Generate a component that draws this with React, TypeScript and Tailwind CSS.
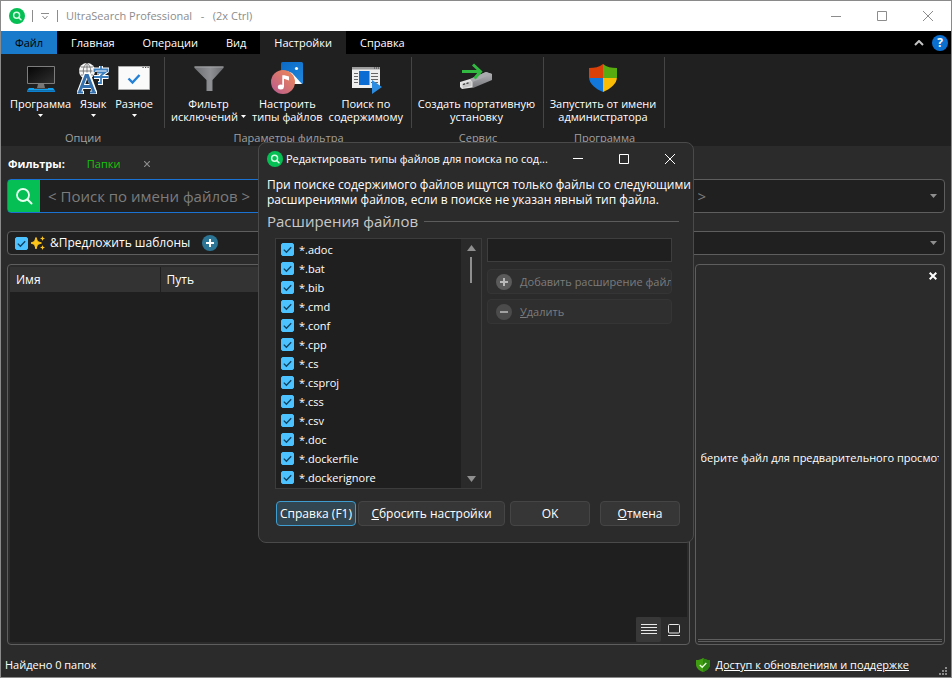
import React, { useState } from "react";

const extensions = [
  "*.adoc",
  "*.bat",
  "*.bib",
  "*.cmd",
  "*.conf",
  "*.cpp",
  "*.cs",
  "*.csproj",
  "*.css",
  "*.csv",
  "*.doc",
  "*.dockerfile",
  "*.dockerignore",
];

const tabs = ["Главная", "Операции", "Вид", "Настройки", "Справка"];

const AppLogo: React.FC = () => (
  <svg className="size-4 shrink-0" viewBox="0 0 16 16" aria-hidden="true">
    <circle cx="8" cy="8" r="8" fill="#06bf54" />
    <circle cx="7.6" cy="7.2" r="3" fill="none" stroke="#d8ffe6" strokeWidth="1.4" />
    <path d="M9.8 9.6l2.2 2.2" stroke="#d8ffe6" strokeWidth="1.5" strokeLinecap="round" />
  </svg>
);

const Caret: React.FC<{ className?: string }> = ({ className }) => (
  <svg className={className} width="5" height="3" viewBox="0 0 5 3" aria-hidden="true">
    <path d="M0 0h5L2.5 3z" fill="currentColor" />
  </svg>
);

interface WindowButtonsProps {
  className: string;
}

const WindowButtons: React.FC<WindowButtonsProps> = ({ className }) => (
  <div className={className}>
    <button type="button" aria-label="Свернуть" className="flex h-full w-[46px] items-center justify-center">
      <svg width="11" height="11" viewBox="0 0 11 11" aria-hidden="true">
        <path d="M0 5.5h10" stroke="currentColor" />
      </svg>
    </button>
    <button type="button" aria-label="Развернуть" className="flex h-full w-[46px] items-center justify-center">
      <svg width="10" height="10" viewBox="0 0 10 10" aria-hidden="true">
        <path d="M.5.5h9v9h-9z" fill="none" stroke="currentColor" />
      </svg>
    </button>
    <button type="button" aria-label="Закрыть" className="flex h-full w-[46px] items-center justify-center">
      <svg width="10" height="10" viewBox="0 0 10 10" aria-hidden="true">
        <path d="M0 0l10 10M10 0L0 10" stroke="currentColor" />
      </svg>
    </button>
  </div>
);

const CheckBox: React.FC<{ id: string }> = ({ id }) => {
  const [checked, setChecked] = useState(true);
  return (
    <span className="grid size-[13px] shrink-0">
      <input
        id={id}
        type="checkbox"
        checked={checked}
        onChange={() => setChecked(!checked)}
        className="col-start-1 row-start-1 size-[13px] appearance-none rounded-xs border border-[#4cc2ff] checked:bg-[#4cc2ff]"
      />
      {checked && (
        <svg className="pointer-events-none col-start-1 row-start-1" width="13" height="13" viewBox="0 0 13 13" aria-hidden="true">
          <path d="M2.8 6.6l2.6 2.6 4.8-5" fill="none" stroke="#12405c" strokeWidth="1.3" />
        </svg>
      )}
    </span>
  );
};

const MonitorIcon: React.FC = () => (
  <svg width="32" height="32" viewBox="0 0 32 32" aria-hidden="true">
    <defs>
      <linearGradient id="screen" x1="0" y1="0" x2="1" y2="1">
        <stop offset="0" stopColor="#050505" />
        <stop offset="1" stopColor="#303030" />
      </linearGradient>
    </defs>
    <path d="M4 26h24l2 2.500H2z" fill="#12a0ee" />
    <path d="M2 28.500h28V30H2z" fill="#0b7fd0" />
    <path d="M13 22h6l1 4h-8z" fill="#777" />
    <path d="M9 26h14v1H9z" fill="#444" />
    <path d="M2.500 4.500h27v17h-27z" fill="url(#screen)" stroke="#7d7d7d" />
  </svg>
);

const LanguageIcon: React.FC = () => (
  <svg width="32" height="32" viewBox="0 0 32 32" aria-hidden="true">
    <circle cx="10" cy="9" r="8" fill="#f4f4f4" />
    <path
      d="M10 1v16M2 9h16M4 5h12M4 13h12M10 1c-5 4-5 12 0 16c5-4 5-12 0-16"
      fill="none"
      stroke="#666"
      strokeWidth=".8"
    />
    <path d="M2.500 30L9 13h2.500l6 17M5.500 24.500h9.500" fill="none" stroke="#fff" strokeWidth="5" />
    <path d="M0 30.500h7M13 30.500h7" stroke="#fff" strokeWidth="3.500" />
    <path d="M2.500 30L9 13.500h1.500L17 30M5.500 24.500h9" fill="none" stroke="#3470ad" strokeWidth="3" />
    <path d="M.5 30.500h5.500M13 30.500h6" stroke="#3470ad" strokeWidth="1.800" />
    <path
      d="M24 4v3M17.500 10V7.500h13V10M20 10.500h8l-4 3v7.500h-3M17 15h14.500"
      fill="none"
      stroke="#fff"
      strokeWidth="4"
    />
    <path
      d="M24 4v3M17.500 10V7.500h13V10M20 10.500h8l-4 3v7.500h-3M17 15h14.500"
      fill="none"
      stroke="#3d7ebd"
      strokeWidth="1.800"
    />
  </svg>
);

const WindowCheckIcon: React.FC = () => (
  <svg width="32" height="32" viewBox="0 0 32 32" aria-hidden="true">
    <path d="M.5 4.500h31v23H.5z" fill="#fafafa" stroke="#aaa" />
    <path d="M24.500 5.500h1.200M27 5.500h1.200M29.500 5.500h1.200" stroke="#444" />
    <path d="M10.500 16.500l4 4 7-7.500" fill="none" stroke="#2380d8" strokeWidth="2.400" />
  </svg>
);

const FunnelIcon: React.FC = () => (
  <svg width="32" height="32" viewBox="0 0 32 32" aria-hidden="true">
    <defs>
      <linearGradient id="funnel" x1="0" y1="0" x2="1" y2="0">
        <stop offset="0" stopColor="#6d6f72" />
        <stop offset=".55" stopColor="#8e9093" />
        <stop offset="1" stopColor="#696b6e" />
      </linearGradient>
    </defs>
    <path d="M1.500 4.500h29v1.500L19.500 18v11h-6V18L1.500 6z" fill="url(#funnel)" />
    <path d="M1.500 4.500h29v1H1.500z" fill="#a4a5a7" />
  </svg>
);

const MediaIcon: React.FC = () => (
  <svg width="32" height="32" viewBox="0 0 32 32" aria-hidden="true">
    <defs>
      <linearGradient id="picture" x1="0" y1="0" x2="1" y2="1">
        <stop offset="0" stopColor="#0a69c4" />
        <stop offset="1" stopColor="#2187dc" />
      </linearGradient>
      <linearGradient id="music" x1="0" y1="1" x2="1" y2="0">
        <stop offset="0" stopColor="#b85a92" />
        <stop offset="1" stopColor="#f08a52" />
      </linearGradient>
    </defs>
    <rect x="10" y="0" width="22" height="22" rx="1.500" fill="url(#picture)" />
    <path d="M16 9l5 2 10 11H20z" fill="#fff" />
    <circle cx="25.500" cy="6.500" r="1.600" fill="#fff" />
    <circle cx="12" cy="20" r="12" fill="url(#music)" />
    <ellipse cx="9.800" cy="25" rx="3" ry="2.500" fill="#fff" />
    <path d="M11.300 13.200h2l4.700 1.300v4l-5-1.800v8.300h-1.700z" fill="#fff" />
  </svg>
);

const ContentSearchIcon: React.FC = () => (
  <svg width="32" height="32" viewBox="0 0 32 32" aria-hidden="true">
    <path d="M2 5h28v21H2z" fill="#eeeeee" />
    <path d="M2 5h28v2.500H2z" fill="#9c9c9c" />
    <path d="M24 6h1M26 6h1M28 6h1" stroke="#333" />
    <path d="M4 11.500h4M4 14.500h4M4 17.500h4M4 20.500h4M21 11.500h7M21 14.500h7M21 17.500h7M21 20.500h7" stroke="#666" />
    <path d="M9 9h10.500v14H9z" fill="#0b6cd4" />
    <path d="M22 18v14l10-7z" fill="#2b8ce0" />
  </svg>
);

const UsbIcon: React.FC = () => (
  <svg width="32" height="32" viewBox="0 0 32 32" aria-hidden="true">
    <defs>
      <linearGradient id="usb" x1="0" y1="0" x2="0" y2="1">
        <stop offset="0" stopColor="#b5b5b8" />
        <stop offset="1" stopColor="#77787c" />
      </linearGradient>
    </defs>
    <path d="M10 17l16-7 6 2v6l-19 8-4-3z" fill="url(#usb)" />
    <path d="M10 17l16-7 6 2-19.500 8z" fill="#a9aaad" />
    <path d="M0 20l10-3 2.500 3v5.500L2 27l-2-2z" fill="#e4e4e4" />
    <path d="M2 22l9.500-3v5L3 26z" fill="#c5c5c5" />
    <path d="M3 22.500l2-.6M6.500 21.500l2-.6" stroke="#333" strokeWidth="1.300" />
    <path d="M2 9.500h17M13 2.500l7.500 7-6 7" fill="none" stroke="#32b941" strokeWidth="3" />
  </svg>
);

const AdminShieldIcon: React.FC = () => (
  <svg width="32" height="32" viewBox="0 0 32 32" aria-hidden="true">
    <defs>
      <clipPath id="adminShield">
        <path d="M16 2c4 3 8 4 14 4v9c0 7-7 12-14 15-7-3-14-8-14-15v-9c6 0 10-1 14-4z" />
      </clipPath>
    </defs>
    <g clipPath="url(#adminShield)">
      <path d="M0 0h16v16H0z" fill="#dc4009" />
      <path d="M16 0h16v16H16z" fill="#58ac10" />
      <path d="M0 16h16v16H0z" fill="#1278dc" />
      <path d="M16 16h16v16H16z" fill="#fbbc05" />
    </g>
  </svg>
);

interface RibbonButtonProps {
  icon: React.ReactNode;
  lines: string[];
  caret?: "below" | "inline";
}

const RibbonButton: React.FC<RibbonButtonProps> = ({ icon, lines, caret }) => (
  <button type="button" className="flex flex-col items-center pt-[5px] leading-[13px] text-white">
    {icon}
    <span className="mt-[3px]">{lines[0]}</span>
    {lines[1] && (
      <span className="flex items-center gap-[3px] whitespace-nowrap">
        {lines[1]}
        {caret === "inline" && <Caret />}
      </span>
    )}
    {caret === "below" && <Caret className="mt-1" />}
  </button>
);

interface RibbonGroupProps {
  title: string;
  className: string;
  children: React.ReactNode;
}

const RibbonGroup: React.FC<RibbonGroupProps> = ({ title, className, children }) => (
  <section className={`flex flex-col ${className}`}>
    <div className="flex h-[71px] justify-center gap-1.5 border-r border-[#454545] pr-0.5">{children}</div>
    <h2 className="mt-0.5 text-center leading-4 text-[#a0a0a0]">{title}</h2>
  </section>
);

const EditDialog: React.FC = () => (
  <div
    role="dialog"
    aria-labelledby="dialogTitle"
    className="absolute top-[141px] left-1/2 flex w-[436px] -translate-x-1/2 flex-col rounded-lg border border-[#4a4a4a] bg-[#2b2b2b] pb-4"
  >
    <div className="flex h-[31px] items-center pl-2">
      <AppLogo />
      <h1 id="dialogTitle" className="ml-[3px] flex-1 text-[11px] whitespace-nowrap">
        Редактировать типы файлов для поиска по сод...
      </h1>
      <WindowButtons className="flex h-full text-white" />
    </div>
    <p className="mt-[3px] pl-2 leading-[15px] whitespace-nowrap">
      При поиске содержимого файлов ищутся только файлы со следующими
      <br />
      расширениями файлов, если в поиске не указан явный тип файла.
    </p>
    <div className="mt-1 flex items-center gap-1.5 pr-3.5 pl-2">
      <h2 className="text-[15px] leading-5 text-[#c8c8c8]">Расширения файлов</h2>
      <span className="h-px flex-1 bg-[#5c5c5c]" />
    </div>
    <div className="mt-[7px] flex gap-[5px] pr-[21px] pl-4 text-[11px]">
      <div className="flex w-[207px] border border-[#3c3c3c] bg-[#1f1f1f]">
        <ul className="flex-1 py-px pl-[5px]">
          {extensions.map((ext, i) => (
            <li key={ext} className="flex h-[19px] items-center gap-[5px]">
              <CheckBox id={`ext${i}`} />
              <label htmlFor={`ext${i}`}>{ext}</label>
            </li>
          ))}
        </ul>
        <div className="flex w-5 flex-col items-center bg-[#2a2a2a] py-1.5 text-[#8f8f8f]">
          <svg width="9" height="6" viewBox="0 0 9 6" aria-hidden="true">
            <path d="M4.500 0L9 6H0z" fill="currentColor" />
          </svg>
          <span className="mt-1.5 h-[26px] w-0.5 bg-[#8f8f8f]" />
          <svg className="mt-auto" width="9" height="6" viewBox="0 0 9 6" aria-hidden="true">
            <path d="M0 0h9L4.500 6z" fill="currentColor" />
          </svg>
        </div>
      </div>
      <div className="flex min-w-0 flex-1 flex-col text-[#7c7c7c]">
        <input
          type="text"
          aria-label="Расширение файла"
          className="h-6 border border-[#3e3e3e] bg-[#1f1f1f] px-1 text-white outline-none"
        />
        <button
          type="button"
          disabled
          className="mt-[7px] flex h-[25px] items-center gap-2 overflow-hidden rounded-sm border border-[#353535] bg-[#2f2f2f] pl-2 whitespace-nowrap"
        >
          <svg className="size-4 shrink-0" viewBox="0 0 16 16" aria-hidden="true">
            <circle cx="8" cy="8" r="8" fill="#5b5b5b" />
            <path d="M4 8h8M8 4v8" stroke="#b8b8b8" strokeWidth="2" />
          </svg>
          Добавить расширение файла
        </button>
        <button
          type="button"
          disabled
          className="mt-[5px] flex h-[25px] items-center gap-2 rounded-sm border border-[#353535] bg-[#2f2f2f] pl-2"
        >
          <svg className="size-4 shrink-0" viewBox="0 0 16 16" aria-hidden="true">
            <circle cx="8" cy="8" r="8" fill="#4b4b4b" />
            <path d="M4 8h8" stroke="#a0a0a0" strokeWidth="2" />
          </svg>
          <span>
            <u>У</u>далить
          </span>
        </button>
      </div>
    </div>
    <div className="mt-3 flex h-[25px] pr-[13px] pl-[17px]">
      <button type="button" className="w-20 rounded-sm border border-[#3f9dd0] bg-[#314650] whitespace-nowrap">
        Справка (F1)
      </button>
      <button type="button" className="ml-0.5 w-[147px] rounded-sm border border-[#454545] bg-[#363636]">
        <u>С</u>бросить настройки
      </button>
      <button type="button" className="ml-[5px] w-20 rounded-sm border border-[#454545] bg-[#363636]">
        OK
      </button>
      <button type="button" className="ml-auto w-20 rounded-sm border border-[#454545] bg-[#363636]">
        <u>О</u>тмена
      </button>
    </div>
  </div>
);

export default function App() {
  const [activeTab, setActiveTab] = useState("Настройки");

  return (
    <div className="relative flex min-h-screen flex-col border border-[#8a8a8a] bg-[#2b2b2b] font-['Open_Sans','Noto_Sans',sans-serif] text-[12px] leading-4 text-white">
      <header className="flex h-[30px] items-center bg-white pl-2 text-[11px] text-[#8c8c8c]">
        <AppLogo />
        <span className="ml-[7px] h-3 w-px bg-[#8c8c8c]" />
        <button type="button" aria-label="Настроить панель" className="flex w-6 justify-center">
          <svg width="8" height="7" viewBox="0 0 8 7" aria-hidden="true">
            <path d="M0 .5h8M1.500 3l2.500 3 2.500-3" fill="none" stroke="currentColor" />
          </svg>
        </button>
        <span className="h-3 w-px bg-[#8c8c8c]" />
        <span className="ml-2 whitespace-pre">UltraSearch Professional   -   (2x Ctrl)</span>
        <WindowButtons className="ml-auto flex h-full" />
      </header>

      <nav className="flex h-[23px] items-stretch bg-black text-[11px]">
        <button type="button" className="w-14 bg-[#1979ca] text-black">
          Файл
        </button>
        {tabs.map((tab) => (
          <button
            key={tab}
            type="button"
            onClick={() => setActiveTab(tab)}
            className={`px-3.5 ${tab === activeTab ? "bg-[#202020]" : ""}`}
          >
            {tab}
          </button>
        ))}
        <button type="button" aria-label="Свернуть ленту" className="ml-auto px-2">
          <svg width="10" height="6" viewBox="0 0 10 6" aria-hidden="true">
            <path d="M1 5l4-4 4 4" fill="none" stroke="#c4c4c4" strokeWidth="2" />
          </svg>
        </button>
        <button type="button" aria-label="Помощь" className="mr-[3px]">
          <span className="flex size-4 items-center justify-center rounded-full bg-[#0b6fd0] text-[12px] font-bold">
            ?
          </span>
        </button>
      </nav>

      <div className="flex h-[92px] bg-[#202020] pt-[3px] text-[11px]">
        <RibbonGroup title="Опции" className="w-[164px]">
          <RibbonButton icon={<MonitorIcon />} lines={["Программа"]} caret="below" />
          <RibbonButton icon={<LanguageIcon />} lines={["Язык"]} caret="below" />
          <RibbonButton icon={<WindowCheckIcon />} lines={["Разное"]} caret="below" />
        </RibbonGroup>
        <RibbonGroup title="Параметры фильтра" className="w-[247px]">
          <RibbonButton icon={<FunnelIcon />} lines={["Фильтр", "исключений"]} caret="inline" />
          <RibbonButton icon={<MediaIcon />} lines={["Настроить", "типы файлов"]} />
          <RibbonButton icon={<ContentSearchIcon />} lines={["Поиск по", "содержимому"]} />
        </RibbonGroup>
        <RibbonGroup title="Сервис" className="w-[132px]">
          <RibbonButton icon={<UsbIcon />} lines={["Создать портативную", "установку"]} />
        </RibbonGroup>
        <RibbonGroup title="Программа" className="w-[121px]">
          <RibbonButton icon={<AdminShieldIcon />} lines={["Запустить от имени", "администратора"]} />
        </RibbonGroup>
      </div>

      <main className="flex flex-1 flex-col px-1.5">
        <div className="flex h-[33px] items-center pt-0.5 pl-px text-[11px]">
          <span className="font-bold">Фильтры:</span>
          <span className="ml-[22px] text-[#16c60c]">Папки</span>
          <button type="button" aria-label="Убрать фильтр" className="ml-[22px] p-0.5 text-[#8c8c8c]">
            <svg width="6" height="6" viewBox="0 0 6 6" aria-hidden="true">
              <path d="M0 0l6 6M6 0L0 6" stroke="currentColor" strokeWidth="1.200" />
            </svg>
          </button>
        </div>

        <div className="flex h-[34px]">
          <div className="flex flex-1 rounded-l-sm border border-[#1a72d2] bg-[#202020]">
            <button
              type="button"
              aria-label="Искать"
              className="flex w-8 items-center justify-center rounded-l-xs bg-[#06bf54]"
            >
              <svg width="18" height="18" viewBox="0 0 18 18" aria-hidden="true">
                <circle cx="8" cy="8" r="6" fill="none" stroke="#e8fff0" strokeWidth="1.800" />
                <path d="M12.500 12.500l4 4" stroke="#e8fff0" strokeWidth="2" strokeLinecap="round" />
              </svg>
            </button>
            <input
              type="text"
              aria-label="Поиск по имени файлов"
              placeholder="< Поиск по имени файлов >"
              className="min-w-0 flex-1 bg-transparent pl-2 text-[15px] outline-none placeholder:text-[#7c7c7c]"
            />
          </div>
          <div className="flex flex-1 items-center rounded-r-sm border border-[#5e5e5e] bg-[#202020] pr-[7px]">
            <input
              type="text"
              aria-label="Поиск по содержимому"
              placeholder=">"
              className="min-w-0 flex-1 bg-transparent pl-56 text-[15px] outline-none placeholder:text-[#7c7c7c]"
            />
            <button type="button" aria-label="История поиска" className="text-[#8f8f8f]">
              <svg width="7" height="4" viewBox="0 0 7 4" aria-hidden="true">
                <path d="M0 0h7L3.500 4z" fill="currentColor" />
              </svg>
            </button>
          </div>
        </div>

        <div className="mt-[18px] flex h-6 items-center rounded-sm border border-[#5e5e5e] bg-[#202020] px-[7px]">
          <CheckBox id="suggest" />
          <svg className="ml-[3px]" width="14" height="14" viewBox="0 0 14 14" aria-hidden="true">
            <path d="M5 1.500l1.500 4L10.500 7l-4 1.500L5 13 3.500 8.500 0 7l3.500-1.500z" fill="#ffc61a" stroke="#ffc61a" strokeLinejoin="round" />
            <path d="M11.500 0l.7 1.800L14 2.500l-1.800.7-.7 1.800-.7-1.800L9 2.500l1.800-.7z" fill="#ffc61a" />
            <path d="M11.500 9l.7 1.800 1.800.7-1.800.7-.7 1.800-.7-1.800-1.800-.7 1.800-.7z" fill="#ffc61a" />
          </svg>
          <label htmlFor="suggest" className="ml-[5px]">
            &amp;Предложить шаблоны
          </label>
          <button type="button" aria-label="Добавить шаблон" className="ml-3">
            <svg className="size-4" viewBox="0 0 16 16" aria-hidden="true">
              <circle cx="8" cy="8" r="8" fill="#2d7595" />
              <path d="M4 8h8M8 4v8" stroke="#fff" strokeWidth="2" />
            </svg>
          </button>
          <button type="button" aria-label="Список шаблонов" className="ml-auto text-[#8f8f8f]">
            <svg width="7" height="4" viewBox="0 0 7 4" aria-hidden="true">
              <path d="M0 0h7L3.500 4z" fill="currentColor" />
            </svg>
          </button>
        </div>

        <div className="mt-[9px] flex flex-1 gap-[5px]">
          <section className="flex flex-1 flex-col rounded-sm border border-[#5e5e5e] p-0.5">
            <div className="flex flex-1 flex-col bg-[#1f1f1f]">
              <table className="w-full table-fixed text-left">
                <thead>
                  <tr className="h-[25px] bg-[#333333]">
                    <th className="w-[150px] border-r border-[#1f1f1f] pl-1.5 font-normal">Имя</th>
                    <th className="pl-1.5 font-normal">Путь</th>
                  </tr>
                </thead>
              </table>
              <div className="mt-auto ml-auto flex h-[25px] bg-[#2b2b2b] pr-px">
                <button
                  type="button"
                  aria-label="Таблица"
                  className="flex w-[25px] items-center justify-center rounded-xs bg-[#383838]"
                >
                  <svg width="16" height="11" viewBox="0 0 16 11" aria-hidden="true">
                    <path d="M0 .5h16M0 3.500h16M0 6.500h16M0 9.500h16" stroke="#e8e8e8" />
                  </svg>
                </button>
                <button type="button" aria-label="Эскизы" className="flex w-[25px] items-center justify-center">
                  <svg width="12" height="12" viewBox="0 0 12 12" aria-hidden="true">
                    <rect x=".5" y=".5" width="11" height="8.500" rx="1" fill="none" stroke="#e8e8e8" />
                    <path d="M0 11.500h12" stroke="#e8e8e8" />
                  </svg>
                </button>
              </div>
            </div>
          </section>

          <aside className="flex w-[250px] flex-col rounded-sm border border-[#5e5e5e] p-0.5">
            <button type="button" aria-label="Закрыть просмотр" className="mt-[5px] mr-[5px] self-end">
              <svg width="8" height="8" viewBox="0 0 8 8" aria-hidden="true">
                <path d="M.7.700l6.600 6.600M7.300.700L.700 7.300" stroke="#fff" strokeWidth="2" />
              </svg>
            </button>
            <p className="mx-[3px] my-auto flex justify-center overflow-hidden pb-1 text-[11px] whitespace-nowrap">
              <span>Выберите файл для предварительного просмотра</span>
            </p>
            <span className="h-[3px] border-y border-[#5e5e5e]" />
          </aside>
        </div>
      </main>

      <footer className="flex h-8 items-center pl-1 text-[11px]">
        <span className="pt-2">Найдено 0 папок</span>
        <svg className="mt-2 ml-auto" width="14" height="14" viewBox="0 0 14 14" aria-hidden="true">
          <path d="M7 0c2 1.500 4 2 7 2v4.500C14 10.500 10 13 7 14 4 13 0 10.500 0 6.500V2c3 0 5-.5 7-2z" fill="#3f9d12" />
          <path d="M7 0c2 1.500 4 2 7 2v4.500C14 10.500 10 13 7 14z" fill="#2c8411" />
          <path d="M3.800 7l2.400 2.300L10.300 5" fill="none" stroke="#e9ffe0" strokeWidth="1.300" />
        </svg>
        <a href="#support" className="mt-2 ml-[5px] underline">
          Доступ к обновлениям и поддержке
        </a>
        <svg className="mr-1 mb-0.5 ml-[30px] self-end" width="8" height="8" viewBox="0 0 8 8" aria-hidden="true">
          <path d="M6 0h2v2H6zM3 3h2v2H3zM6 3h2v2H6zM0 6h2v2H0zM3 6h2v2H3zM6 6h2v2H6z" fill="#8a8a8a" />
        </svg>
      </footer>

      <EditDialog />
    </div>
  );
}
